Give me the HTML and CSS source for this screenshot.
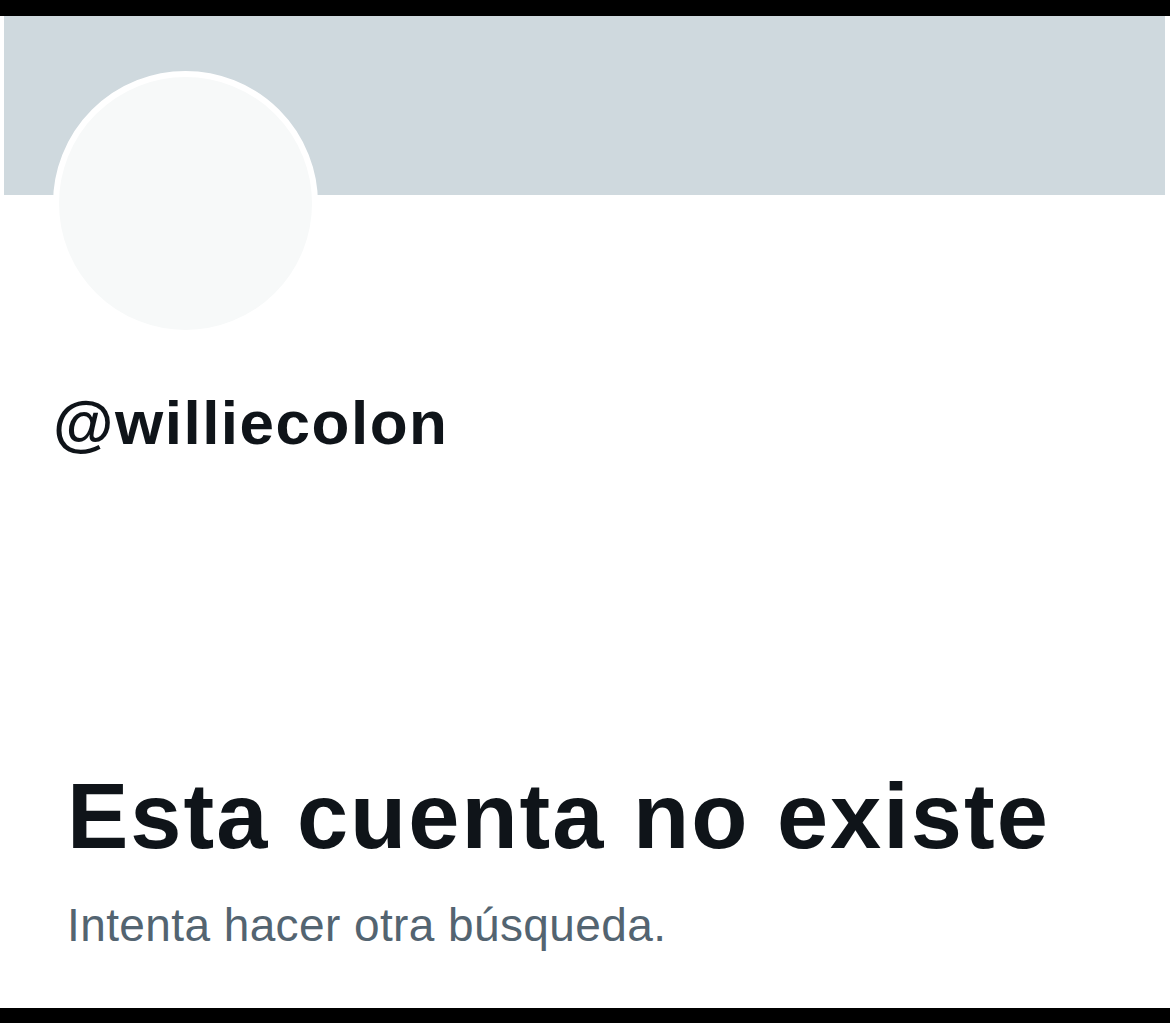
FILE: index.html
```html
<!DOCTYPE html>
<html lang="es">
<head>
    <meta charset="UTF-8">
    <meta name="viewport" content="width=device-width, initial-scale=1.0">
    <title>@williecolon</title>
    <link rel="stylesheet" href="styles.css">
</head>
<body>
    <div class="top-bar"></div>
    <div class="profile">
        <div class="profile-banner"></div>
        <div class="profile-avatar"></div>
        <h2 class="profile-handle">@williecolon</h2>

        <div class="empty-state">
            <h1 class="empty-title">Esta cuenta no existe</h1>
            <p class="empty-text">Intenta hacer otra búsqueda.</p>
        </div>
    </div>
    <div class="bottom-bar"></div>
</body>
</html>
```

FILE: styles.css
```css
body {
    font-family: 'Liberation Sans', Arial, sans-serif;
    margin: 0;
    padding: 0;
    background: #ffffff;
    color: #0f1419;
    width: 1170px;
    height: 1023px;
    display: flex;
    flex-direction: column;
    overflow: hidden;
}

.top-bar {
    height: 16px;
    background: #000;
    flex-shrink: 0;
}

.bottom-bar {
    height: 15px;
    background: #000;
    flex-shrink: 0;
}

.profile {
    flex: 1;
    display: flex;
    flex-direction: column;
}

.profile-banner {
    height: 179px;
    margin: 0 5px 0 4px;
    background: #cfd9de;
}

.profile-avatar {
    width: 253px;
    height: 253px;
    border: 6px solid #ffffff;
    border-radius: 50%;
    background: #f7f9f9;
    margin: -124px 0 0 53px;
}

.profile-handle {
    margin: 56px 0 0 53px;
    font-size: 62px;
    font-weight: 700;
    line-height: 62px;
    letter-spacing: 1.5px;
}

.empty-state {
    margin-top: auto;
    padding: 0 0 60px 67px;
}

.empty-title {
    margin: 0;
    font-size: 92px;
    font-weight: 700;
    line-height: 92px;
    letter-spacing: 2px;
}

.empty-text {
    margin: 40px 0 0;
    font-size: 46px;
    line-height: 46px;
    letter-spacing: 0.4px;
    color: #536471;
}
```
